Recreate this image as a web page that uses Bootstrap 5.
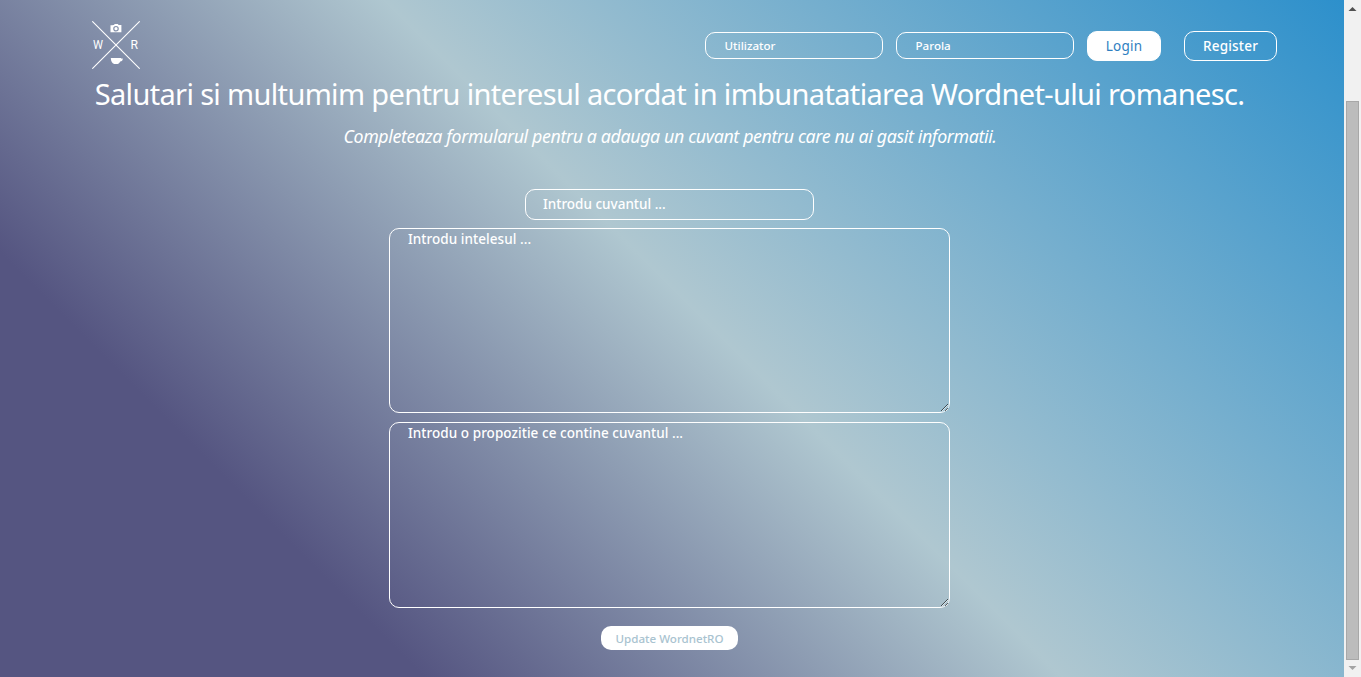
<!DOCTYPE html>
<html lang="ro">
<head>
<meta charset="utf-8">
<meta name="viewport" content="width=device-width, initial-scale=1">
<title>WordnetRO</title>
<link rel="stylesheet" href="https://cdn.jsdelivr.net/npm/bootstrap@5.3.0/dist/css/bootstrap.min.css">
<style>
  body { font-family: "Noto Sans", sans-serif; height: 677px; overflow: hidden; color: #fff; }
  .page-area {
    width: 1344px; padding: 0 67px 0 92px;
    background: linear-gradient(45deg, #555581 20%, #afc7d0 50%, #1f8acb 100%) 0 -102px / 1344px 779px no-repeat;
  }
  .top-bar { height: 69px; padding-top: 21px; }
  .top-form { margin-top: 10px; }
  .intro { padding-right: 30px; }
  .glass, .glass:focus {
    color: #fff; background: transparent; border: 1px solid #fff; border-radius: 10px;
    box-shadow: none; font-weight: 500;
  }
  .glass::placeholder { color: #fff; opacity: 1; }
  .login-field { width: 178px; height: 27px; padding: 0 18.5px; font-size: 11.6px; margin: 1px 13px 0 0; }
  .pill { border-radius: 10px; height: 30px; padding: 0; font-size: 13.5px; line-height: 28px; font-weight: 500; border: 1px solid #fff; }
  .pill-login { width: 74px; background: #fff; color: #2f7fc1; font-weight: 400; letter-spacing: .2px; }
  .pill-register { width: 93px; margin-left: 23px; color: #fff; letter-spacing: .2px; }
  .headline { font-size: 29px; line-height: 33px; margin: 8px 0 0; white-space: nowrap; font-weight: 400; letter-spacing: -.66px; }
  .subline { font-size: 17.8px; line-height: 24px; margin: 14px 0 0; padding-left: 1px; font-style: italic; white-space: nowrap; letter-spacing: -.37px; }
  .word-field { width: 289px; height: 31px; padding: 0 17px 2px; font-size: 13.5px; margin-top: 41px; }
  .text-box, .text-box:focus { width: 561px; height: 185px; min-height: 0; padding: 1px 18px; font-size: 13.5px; line-height: 18px; resize: both; letter-spacing: .05px; }
  .text-box-example, .text-box-example:focus { height: 186px; margin-top: 9px; }
  .update { width: 137px; height: 24px; margin-top: 18px; padding-top: 1px; font-size: 11.6px; line-height: 24px; border: 0; background: #fff; color: #a9c3d0; }
  .scroll-col { width: 17px; background: #f1f1f1; }
  .scroll-thumb { width: 13px; height: 559px; margin-top: 84px; background: #bcbcbc; border: 1px solid #a8a8a8; }
</style>
</head>
<body class="d-flex">
<main class="page-area d-flex flex-column flex-shrink-0">
  <header class="top-bar d-flex justify-content-between align-items-start">
    <svg width="48" height="48" viewBox="0 0 48 48" fill="#fff" aria-label="WR">
      <path d="M.3.3 47.7 47.7M47.7.3.3 47.7" stroke="#fff" stroke-width="1.1"/>
      <path fill-rule="evenodd" d="M18.500 4.200h2.200V3.900h1.300l.7-1h3.200l.7 1h2.800v7.400H18.500zM24 4.900a2.800 2.800 0 1 0 0 5.600 2.800 2.800 0 0 0 0-5.600zm0 1.200a1.600 1.600 0 1 1 0 3.200 1.600 1.600 0 0 1 0-3.200z"/>
      <path d="M18.800 37h10.200v.5h1.800c0 2-1 3-2.600 3.100-.7 1.500-1.700 2.200-2.600 2.400h-3.400c-2-.6-3.300-2.600-3.400-6z"/>
      <text x="1" y="28" font-family="Roboto, sans-serif" font-size="12.500" textLength="10" lengthAdjust="spacingAndGlyphs">W</text>
      <text x="38.500" y="28" font-family="Roboto, sans-serif" font-size="12.500" textLength="7.500" lengthAdjust="spacingAndGlyphs">R</text>
    </svg>
    <form class="top-form d-flex align-items-start">
      <input class="form-control glass login-field" type="text" placeholder="Utilizator">
      <input class="form-control glass login-field" type="text" placeholder="Parola">
      <button class="btn pill pill-login" type="button">Login</button>
      <button class="btn pill pill-register" type="button">Register</button>
    </form>
  </header>
  <section class="intro d-flex flex-column align-items-center">
    <h1 class="headline text-center">Salutari si multumim pentru interesul acordat in imbunatatiarea Wordnet-ului romanesc.</h1>
    <p class="subline">Completeaza formularul pentru a adauga un cuvant pentru care nu ai gasit informatii.</p>
    <form class="d-flex flex-column align-items-center">
      <input class="form-control glass word-field" type="text" placeholder="Introdu cuvantul ...">
      <textarea class="form-control glass text-box mt-2" placeholder="Introdu intelesul ..."></textarea>
      <textarea class="form-control glass text-box text-box-example" placeholder="Introdu o propozitie ce contine cuvantul ..."></textarea>
      <button class="btn pill update" type="button">Update WordnetRO</button>
    </form>
  </section>
</main>
<aside class="scroll-col d-flex flex-column align-items-center flex-shrink-0" aria-hidden="true">
  <svg width="17" height="17"><path d="M4.500 11 8.500 7l4 4z" fill="#505050"/></svg>
  <div class="scroll-thumb"></div>
  <svg width="17" height="17"><path d="M4.500 6h8l-4 4z" fill="#a3a3a3"/></svg>
</aside>
<script src="https://cdn.jsdelivr.net/npm/bootstrap@5.3.0/dist/js/bootstrap.bundle.min.js"></script>
</body>
</html>
